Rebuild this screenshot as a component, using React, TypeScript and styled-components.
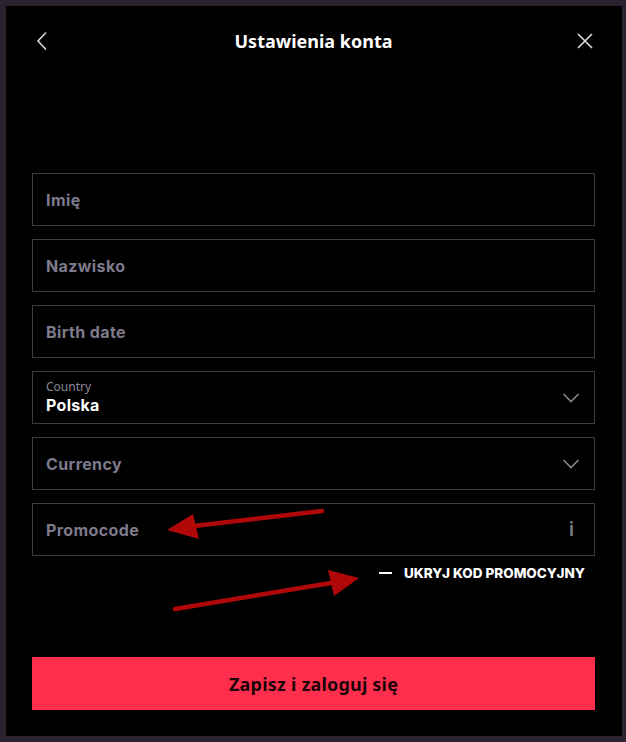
import React from "react";
import styled, { createGlobalStyle } from "styled-components";

const Global = createGlobalStyle`
  html, body { margin: 0; padding: 0; }
  body {
    background: #2a2431;
    width: 626px;
    height: 742px;
    overflow: hidden;
    font-family: "Inter", "Noto Sans", sans-serif;
  }
`;

const Page = styled.div`
  padding: 6px 4px 6px 6px;
  height: 742px;
  box-sizing: border-box;
`;

const Panel = styled.div`
  position: relative;
  width: 616px;
  height: 730px;
  background: #000;
  box-sizing: border-box;
  padding: 0 27px 26px 26px;
  display: flex;
  flex-direction: column;
`;

const Header = styled.div`
  height: 70px;
  display: flex;
  align-items: center;
  justify-content: space-between;
`;

const IconButton = styled.button`
  background: none;
  border: none;
  padding: 0;
  width: 20px;
  height: 20px;
  display: flex;
  align-items: center;
  justify-content: center;
  cursor: pointer;
`;

const Title = styled.h1`
  margin: 0;
  font-family: "Noto Sans", sans-serif;
  font-weight: 700;
  font-size: 18px;
  color: #fff;
  letter-spacing: 0px;
`;

const Form = styled.div`
  margin-top: 97px;
  display: flex;
  flex-direction: column;
  gap: 13px;
`;

const Field = styled.div`
  height: 53px;
  box-sizing: border-box;
  border: 1px solid #3c3c3e;
  display: flex;
  align-items: center;
  justify-content: space-between;
  padding: 0 14px 0 13px;
`;

const Placeholder = styled.span`
  font-family: "Inter", sans-serif;
  font-weight: 700;
  font-size: 16px;
  letter-spacing: 0.4px;
  color: #7d7b8c;
`;

const Stack = styled.div`
  display: flex;
  flex-direction: column;
  gap: 1px;
`;

const SmallLabel = styled.span`
  font-family: "Noto Sans", sans-serif;
  font-size: 12px;
  color: #8a8895;
  line-height: 14px;
`;

const Value = styled.span`
  font-family: "Inter", sans-serif;
  font-weight: 700;
  font-size: 16px;
  letter-spacing: 0.3px;
  color: #fff;
  line-height: 20px;
`;

const Info = styled.span`
  font-family: "Inter", sans-serif;
  font-weight: 600;
  font-size: 19px;
  color: #7d7d80;
  margin-right: 6px;
`;

const Toggle = styled.div`
  margin-top: -4px;
  align-self: flex-end;
  display: flex;
  align-items: center;
  gap: 12px;
  padding-right: 10px;
`;

const Dash = styled.span`
  display: block;
  width: 13px;
  height: 2px;
  background: #fff;
`;

const ToggleText = styled.span`
  font-family: "Inter", sans-serif;
  font-weight: 800;
  font-size: 13.5px;
  line-height: 16px;
  color: #fff;
  letter-spacing: 0px;
  text-transform: uppercase;
`;

const Submit = styled.button`
  margin-top: auto;
  height: 53px;
  border: none;
  background: #ff2e4c;
  color: #1b0508;
  font-family: "Noto Sans", sans-serif;
  font-weight: 700;
  font-size: 18px;
  letter-spacing: 0.2px;
  cursor: pointer;
`;

const Arrows = styled.svg`
  position: absolute;
  left: 0;
  top: 0;
  pointer-events: none;
`;

const Chevron = () => (
  <svg width="18" height="12" viewBox="0 0 18 12">
    <path d="M1.5 2 L9 9.5 L16.5 2" fill="none" stroke="#85858a" strokeWidth="1.6" />
  </svg>
);

export default function App() {
  return (
    <>
      <Global />
      <Page>
        <Panel>
          <Header>
            <IconButton aria-label="back">
              <svg width="12" height="20" viewBox="0 0 12 20">
                <path d="M10 1.5 L2 10 L10 18.5" fill="none" stroke="#d8d8d8" strokeWidth="1.6" />
              </svg>
            </IconButton>
            <Title>Ustawienia konta</Title>
            <IconButton aria-label="close">
              <svg width="16" height="16" viewBox="0 0 16 16">
                <path d="M1 1 L15 15 M15 1 L1 15" fill="none" stroke="#d8d8d8" strokeWidth="1.7" />
              </svg>
            </IconButton>
          </Header>
          <Form>
            <Field>
              <Placeholder>Imię</Placeholder>
            </Field>
            <Field>
              <Placeholder>Nazwisko</Placeholder>
            </Field>
            <Field>
              <Placeholder>Birth date</Placeholder>
            </Field>
            <Field>
              <Stack>
                <SmallLabel>Country</SmallLabel>
                <Value>Polska</Value>
              </Stack>
              <Chevron />
            </Field>
            <Field>
              <Placeholder>Currency</Placeholder>
              <Chevron />
            </Field>
            <Field>
              <Placeholder>Promocode</Placeholder>
              <Info>i</Info>
            </Field>
            <Toggle>
              <Dash />
              <ToggleText>Ukryj kod promocyjny</ToggleText>
            </Toggle>
          </Form>
          <Submit>Zapisz i zaloguj się</Submit>
          <Arrows width="616" height="730" viewBox="0 0 616 730">
            <path d="M316 505 L188 520" stroke="#b00808" strokeWidth="4.5" strokeLinecap="round" />
            <path d="M161 524 L187 508 L193 533 Z" fill="#b00808" />
            <path d="M169 603 L325 577" stroke="#b00808" strokeWidth="4.5" strokeLinecap="round" />
            <path d="M353 572 L322 564 L328 590 Z" fill="#b00808" />
          </Arrows>
        </Panel>
      </Page>
    </>
  );
}
